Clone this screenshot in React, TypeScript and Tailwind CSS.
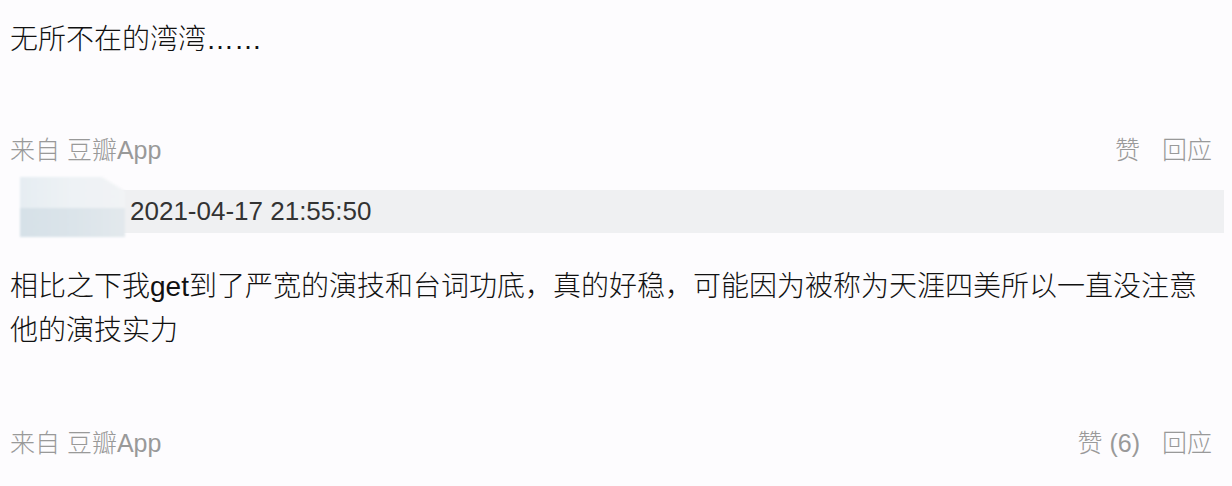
import React from 'react';

const font = { fontFamily: '"Liberation Sans", "Noto Sans CJK SC", sans-serif' };

function MetaRow({ like }: { like: string }) {
  return (
    <div className="flex items-center justify-between pl-[10px] pr-[20px] h-[36px] text-[25px] leading-[36px] font-light text-[#999]">
      <span>来自 豆瓣App</span>
      <div className="flex gap-[22px]">
        <span>{like}</span>
        <span>回应</span>
      </div>
    </div>
  );
}

export default function App() {
  return (
    <div className="w-[1232px] h-[486px] overflow-hidden bg-[#fdfcfe]" style={font}>
      <p className="pt-[18px] pl-[10px] text-[28px] leading-[44px] font-light text-[#111]">
        无所不在的湾湾……
      </p>

      <div className="mt-[70px]">
        <MetaRow like="赞" />
      </div>

      {/* blurred avatar + timestamp bar */}
      <div className="mt-[9px] flex items-start h-[60px]">
        <div className="ml-[20px] w-[105px] h-[60px] shrink-0 flex flex-col blur-[1px]">
          <div className="h-[31px] w-full bg-gradient-to-r from-[#e6edf2] via-[#eef2f5] to-[#f1f3f5] [clip-path:polygon(0_0,78%_0,100%_45%,100%_100%,0_100%)]" />
          <div className="h-[29px] w-full bg-gradient-to-r from-[#d6e1e8] via-[#dbe4ea] to-[#e3e9ed]" />
        </div>
        <div className="mt-[13px] h-[43px] flex-1 mr-[8px] -ml-[10px] bg-[#eff0f2] flex items-center pl-[15px] text-[26px] text-[#333]">
          2021-04-17 21:55:50
        </div>
      </div>

      <p className="mt-[28px] pl-[10px] pr-[20px] text-[28px] leading-[44px] font-light text-[#111]">
        相比之下我get到了严宽的演技和台词功底，真的好稳，可能因为被称为天涯四美所以一直没注意
        <br />
        他的演技实力
      </p>

      <div className="mt-[72px]">
        <MetaRow like="赞 (6)" />
      </div>
    </div>
  );
}
